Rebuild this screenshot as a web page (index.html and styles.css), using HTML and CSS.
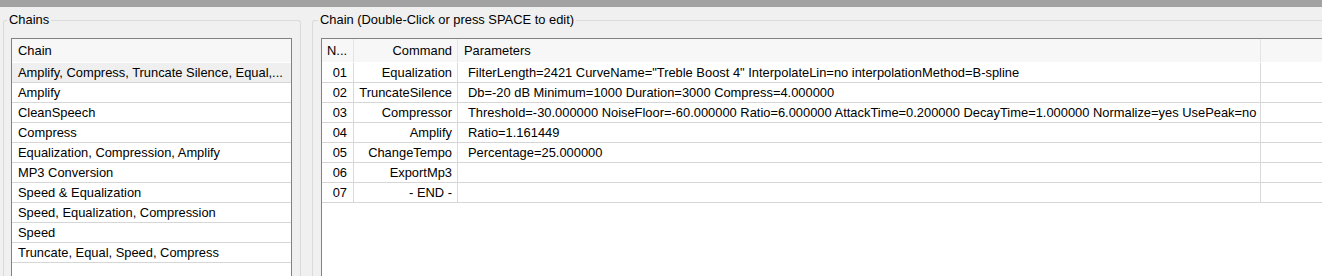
FILE: index.html
```html
<!DOCTYPE html>
<html>
<head>
<meta charset="utf-8">
<link rel="stylesheet" href="styles.css">
</head>
<body>
<div class="titlebar"></div>
<div class="panes">
  <fieldset class="group group-chains">
    <legend class="group-label">Chains</legend>
    <div class="list">
      <div class="list-head">Chain</div>
      <div class="list-row selected">Amplify, Compress, Truncate Silence, Equal,...</div>
      <div class="list-row">Amplify</div>
      <div class="list-row">CleanSpeech</div>
      <div class="list-row">Compress</div>
      <div class="list-row">Equalization, Compression, Amplify</div>
      <div class="list-row">MP3 Conversion</div>
      <div class="list-row">Speed &amp; Equalization</div>
      <div class="list-row">Speed, Equalization, Compression</div>
      <div class="list-row">Speed</div>
      <div class="list-row">Truncate, Equal, Speed, Compress</div>
    </div>
  </fieldset>
  <fieldset class="group group-chain">
    <legend class="group-label">Chain (Double-Click or press SPACE to edit)</legend>
    <div class="grid-box">
      <table class="grid">
        <colgroup>
          <col class="c-num"><col class="c-cmd"><col class="c-par"><col class="c-rest">
        </colgroup>
        <thead>
          <tr><th class="num-h">N...</th><th class="cmd">Command</th><th class="par-h">Parameters</th><th class="rest"></th></tr>
        </thead>
        <tbody>
          <tr><td class="num">01</td><td class="cmd">Equalization</td><td class="par">FilterLength=2421 CurveName="Treble Boost 4" InterpolateLin=no interpolationMethod=B-spline</td><td class="rest"></td></tr>
          <tr><td class="num">02</td><td class="cmd">TruncateSilence</td><td class="par">Db=-20 dB Minimum=1000 Duration=3000 Compress=4.000000</td><td class="rest"></td></tr>
          <tr><td class="num">03</td><td class="cmd">Compressor</td><td class="par">Threshold=-30.000000 NoiseFloor=-60.000000 Ratio=6.000000 AttackTime=0.200000 DecayTime=1.000000 Normalize=yes UsePeak=no</td><td class="rest"></td></tr>
          <tr><td class="num">04</td><td class="cmd">Amplify</td><td class="par">Ratio=1.161449</td><td class="rest"></td></tr>
          <tr><td class="num">05</td><td class="cmd">ChangeTempo</td><td class="par">Percentage=25.000000</td><td class="rest"></td></tr>
          <tr><td class="num">06</td><td class="cmd">ExportMp3</td><td class="par"></td><td class="rest"></td></tr>
          <tr><td class="num">07</td><td class="cmd">- END -</td><td class="par"></td><td class="rest"></td></tr>
        </tbody>
      </table>
    </div>
  </fieldset>
</div>
</body>
</html>
```

FILE: styles.css
```css
html, body {
  margin: 0;
  height: 276px;
  overflow: hidden;
  background: #f0f0f0;
  font-family: "Liberation Sans", Arial, sans-serif;
  font-size: 12.9px;
  color: #000;
}

.titlebar {
  height: 7px;
  background: #a2a2a2;
}

.panes {
  display: flex;
  gap: 11px;
  padding-left: 3px;
  margin-top: 6px;
  height: 263px;
  align-items: stretch;
}

.group {
  margin: 0;
  border: 1px solid #dadada;
  border-bottom: none;
  border-radius: 3px 3px 0 0;
  padding: 11px 8px 0 7px;
  min-width: 0;
  box-sizing: border-box;
  flex: none;
  display: flex;
  flex-direction: column;
}

.group-label {
  padding: 0 2px;
  margin-left: -4px;
  line-height: 14px;
  white-space: nowrap;
}

.group-chains {
  width: 298px;
}

.group-chain {
  flex: 1;
  padding-left: 8px;
  padding-right: 0;
  border-right: none;
  border-radius: 3px 0 0 0;
}

.group-chain .group-label {
  margin-left: -3px;
}

.list {
  flex: 1;
  border: 1px solid #828282;
  border-bottom: none;
  background: #fff;
}

.list-head {
  height: 24px;
  line-height: 23px;
  box-sizing: border-box;
  border-bottom: 1px solid #fff;
  background: #f7f7f7;
  padding-left: 6px;
}

.list-row {
  height: 20px;
  line-height: 19px;
  box-sizing: border-box;
  border-bottom: 1px solid #d6d6d6;
  padding-left: 6px;
  white-space: nowrap;
}

.list-row.selected {
  background: #efefef;
}

.grid-box {
  flex: 1;
  border: 1px solid #828282;
  border-right: none;
  border-bottom: none;
  background: #fff;
}

.grid {
  border-collapse: separate;
  border-spacing: 0;
  table-layout: fixed;
  width: 100%;
  font-size: inherit;
}

.c-num { width: 32px; }
.c-cmd { width: 104px; }
.c-par { width: 803px; }

.grid th, .grid td {
  padding: 0;
  box-sizing: border-box;
  border-right: 1px solid #d9d9d9;
  border-bottom: 1px solid #d6d6d6;
  white-space: nowrap;
  overflow: hidden;
  font-weight: normal;
}

.grid .rest {
  border-right: none;
}

.grid th {
  height: 24px;
  line-height: 23px;
  background: #f7f7f7;
  border-bottom-color: #fff;
  border-right-color: #e4e4e4;
  text-align: left;
}

.grid td {
  height: 20px;
  line-height: 19px;
}

.grid .num-h {
  padding-left: 5px;
}

.grid .num {
  text-align: right;
  padding-right: 6px;
}

.grid .cmd {
  text-align: right;
  padding-right: 5px;
}

.grid .par-h {
  padding-left: 6px;
}

.grid .par {
  padding-left: 10px;
}
```
